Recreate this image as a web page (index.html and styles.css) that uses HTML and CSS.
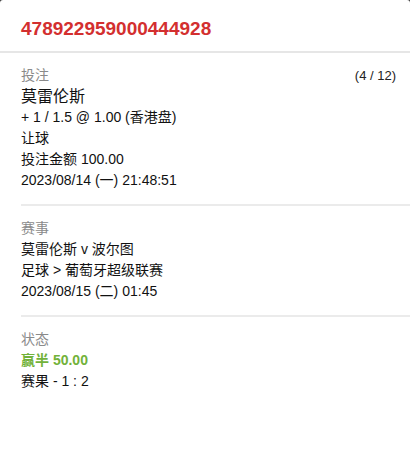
FILE: index.html
```html
<!DOCTYPE html>
<html>
<head>
    <title>注单详情</title>
    <link rel="stylesheet" href="styles.css">
</head>
<body>
    <div class="panel">
        <div class="panel-head">478922959000444928</div>

        <div class="panel-body">
            <div class="section">
                <div class="row">
                    <span class="label">投注</span>
                    <span class="count">(4 / 12)</span>
                </div>
                <div class="pick">莫雷伦斯</div>
                <div class="line">+ 1 / 1.5 @ 1.00 (香港盘)</div>
                <div class="line">让球</div>
                <div class="line">投注金额 100.00</div>
                <div class="line">2023/08/14 (一) 21:48:51</div>
            </div>

            <div class="section">
                <div class="label">赛事</div>
                <div class="line">莫雷伦斯 v 波尔图</div>
                <div class="line">足球 &gt; 葡萄牙超级联赛</div>
                <div class="line">2023/08/15 (二) 01:45</div>
            </div>

            <div class="section">
                <div class="label">状态</div>
                <div class="line win">赢半 50.00</div>
                <div class="line">赛果 - 1 : 2</div>
            </div>
        </div>
    </div>
</body>
</html>
```

FILE: styles.css
```css
html, body {
    margin: 0;
    height: 100%;
    background: #3a3a3a;
}

body {
    font-family: "Liberation Sans", Arial, "Noto Sans CJK SC", sans-serif;
    font-size: 14px;
    line-height: 21px;
    color: #111;
}

.panel {
    min-height: 100%;
    background: #fff;
    border-radius: 3px 3px 0 0;
}

.panel-head {
    padding: 18px 21px 11px;
    font-size: 19px;
    line-height: 22px;
    font-weight: bold;
    color: #d32f2f;
    border-bottom: 2px solid #e6e6e6;
}

.panel-body {
    margin-left: 21px;
}

.section {
    padding: 12px 14px 13px 0;
    border-bottom: 2px solid #ebebeb;
}

.section:last-child {
    border-bottom: none;
}

.row {
    display: flex;
    justify-content: space-between;
    align-items: baseline;
}

.label {
    color: #8a8a8a;
}

.count {
    font-size: 13px;
    color: #222;
}

.pick {
    font-size: 16px;
}

.win {
    color: #72b23a;
    font-weight: bold;
}
```
